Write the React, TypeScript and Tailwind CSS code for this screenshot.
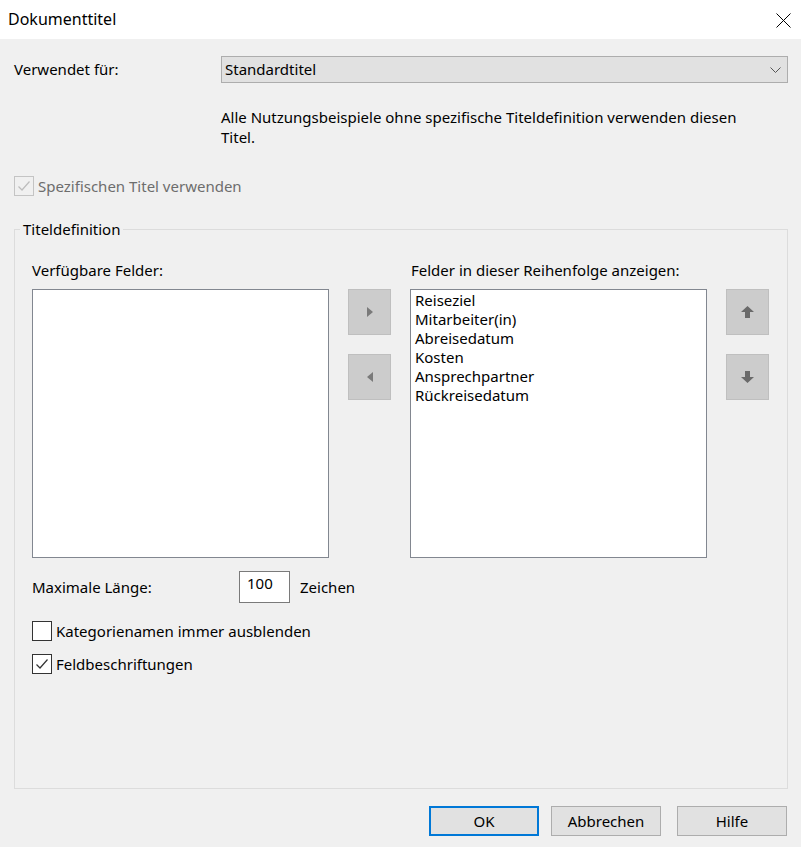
import React from "react";

const font = "font-['Segoe_UI','Noto_Sans','Liberation_Sans',sans-serif]";

const Check = ({ color }: { color: string }) => (
  <svg width="14" height="12" viewBox="0 0 14 12">
    <path d="M1.5 6.5 L5 10 L12.5 1.5" fill="none" stroke={color} strokeWidth="1.2" />
  </svg>
);

const CheckBox = ({
  checked,
  disabled,
  label,
}: {
  checked?: boolean;
  disabled?: boolean;
  label: string;
}) => (
  <div className="flex items-center">
    <div
      className={`w-[20px] h-[20px] border flex items-center justify-center ${
        disabled ? "border-[#c4c4c4] bg-[#f0f0f0]" : "border-[#333333] bg-white"
      }`}
    >
      {checked && <Check color={disabled ? "#bcbcbc" : "#333333"} />}
    </div>
    <span className={`ml-[4px] ${disabled ? "text-[#6d6d6d]" : ""}`}>{label}</span>
  </div>
);

const SideButton = ({ children }: { children: React.ReactNode }) => (
  <div className="w-[43px] h-[46px] bg-[#cccccc] border border-[#bfbfbf] flex items-center justify-center">
    {children}
  </div>
);

const DialogButton = ({ label, primary }: { label: string; primary?: boolean }) => (
  <div
    className={`w-[110px] h-[30px] bg-[#e1e1e1] flex items-center justify-center ${
      primary ? "border-2 border-[#0078d7]" : "border border-[#adadad]"
    }`}
  >
    {label}
  </div>
);

const fields = [
  "Reiseziel",
  "Mitarbeiter(in)",
  "Abreisedatum",
  "Kosten",
  "Ansprechpartner",
  "Rückreisedatum",
];

export default function App() {
  return (
    <div
      className={`w-[801px] h-[847px] bg-[#f0f0f0] flex flex-col text-[15px] leading-[19px] text-black ${font}`}
    >
      {/* title bar */}
      <div className="h-[39px] bg-white flex items-center justify-between pl-[8px] pr-[10px] shrink-0">
        <span className="text-[16px]">Dokumenttitel</span>
        <svg width="15" height="15" viewBox="0 0 15 15" className="mt-[2px]">
          <path d="M0.5 0.5 L14.5 14.5 M14.5 0.5 L0.5 14.5" stroke="#000" strokeWidth="1" />
        </svg>
      </div>

      <div className="flex flex-col pl-[14px] pr-[13px]">
        {/* used for */}
        <div className="mt-[17px] flex items-center h-[27px]">
          <span className="w-[207px]">Verwendet für:</span>
          <div className="flex-1 h-[27px] bg-[#e1e1e1] border border-[#adadad] flex items-center justify-between pl-[3px] pr-[6px]">
            <span>Standardtitel</span>
            <svg width="11" height="6" viewBox="0 0 11 6">
              <path d="M0.5 0.5 L5.5 5.5 L10.5 0.5" fill="none" stroke="#555" strokeWidth="1" />
            </svg>
          </div>
        </div>

        <p className="mt-[24px] ml-[207px] leading-[20px]">
          Alle Nutzungsbeispiele ohne spezifische Titeldefinition verwenden diesen
          <br />
          Titel.
        </p>

        <div className="mt-[29px]">
          <CheckBox checked disabled label="Spezifischen Titel verwenden" />
        </div>

        {/* group box */}
        <fieldset className="mt-[24px] h-[569px] border border-[#dcdcdc]">
          <legend className="ml-[5px] px-[3px]">Titeldefinition</legend>

          <div className="pl-[17px]">
            <div className="mt-[22px] grid grid-cols-[297px_43px_297px_43px] gap-x-[19px]">
              <span>Verfügbare Felder:</span>
              <span />
              <span className="pl-[1px]">Felder in dieser Reihenfolge anzeigen:</span>
              <span />

              <div className="mt-[9px] h-[269px] bg-white border border-[#828790]" />
              <div className="mt-[9px] flex flex-col gap-[19px]">
                <SideButton>
                  <svg width="6" height="10" viewBox="0 0 6 10">
                    <path d="M0 0 L6 5 L0 10 Z" fill="#7a7a7a" />
                  </svg>
                </SideButton>
                <SideButton>
                  <svg width="6" height="10" viewBox="0 0 6 10">
                    <path d="M6 0 L0 5 L6 10 Z" fill="#7a7a7a" />
                  </svg>
                </SideButton>
              </div>
              <div className="mt-[9px] h-[269px] bg-white border border-[#828790] pl-[4px] pt-[1px] flex flex-col">
                {fields.map((f) => (
                  <span key={f}>{f}</span>
                ))}
              </div>
              <div className="mt-[9px] flex flex-col gap-[19px]">
                <SideButton>
                  <svg width="13" height="12" viewBox="0 0 13 12">
                    <path d="M6.5 0 L13 6 H9 V12 H4 V6 H0 Z" fill="#6a6a6a" />
                  </svg>
                </SideButton>
                <SideButton>
                  <svg width="13" height="12" viewBox="0 0 13 12">
                    <path d="M6.5 12 L13 6 H9 V0 H4 V6 H0 Z" fill="#6a6a6a" />
                  </svg>
                </SideButton>
              </div>
            </div>

            {/* max length */}
            <div className="mt-[13px] flex items-center h-[32px]">
              <span className="w-[207px]">Maximale Länge:</span>
              <div className="w-[51px] h-[32px] bg-white border border-[#7a7a7a] pl-[7px] pt-[2px]">100</div>
              <span className="ml-[10px]">Zeichen</span>
            </div>

            <div className="mt-[18px] flex flex-col gap-[13px]">
              <CheckBox label="Kategorienamen immer ausblenden" />
              <CheckBox checked label="Feldbeschriftungen" />
            </div>
          </div>
        </fieldset>

        {/* buttons */}
        <div className="mt-[17px] mr-[1px] flex justify-end">
          <DialogButton label="OK" primary />
          <div className="ml-[12px]">
            <DialogButton label="Abbrechen" />
          </div>
          <div className="ml-[16px]">
            <DialogButton label="Hilfe" />
          </div>
        </div>
      </div>
    </div>
  );
}
